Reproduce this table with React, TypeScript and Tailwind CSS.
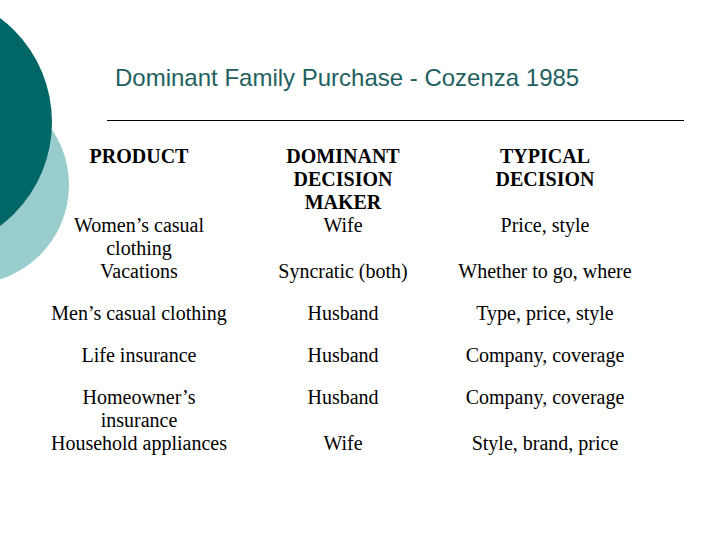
const rows: { cells: string[]; gap: boolean; head?: boolean }[] = [
  { cells: ["PRODUCT", "DOMINANT DECISION MAKER", "TYPICAL DECISION"], gap: false, head: true },
  { cells: ["Women’s casual clothing", "Wife", "Price, style"], gap: false },
  { cells: ["Vacations", "Syncratic (both)", "Whether to go, where"], gap: true },
  { cells: ["Men’s casual clothing", "Husband", "Type, price, style"], gap: true },
  { cells: ["Life insurance", "Husband", "Company, coverage"], gap: true },
  { cells: ["Homeowner’s insurance", "Husband", "Company, coverage"], gap: false },
  { cells: ["Household appliances", "Wife", "Style, brand, price"], gap: false },
];

export default function App() {
  return (
    <div className="relative w-[720px] h-[540px] overflow-hidden bg-white">
      {/* decorative circles on the left edge */}
      <div className="absolute left-[-129px] top-[86px] w-[198px] h-[198px] rounded-full bg-[#99cccc]" />
      <div className="absolute left-[-208px] top-[-8px] w-[260px] h-[260px] rounded-full bg-[#006666]" />

      <div className="relative">
        <h1
          className="pl-[115px] pt-[64px] text-[24px] leading-[28px] text-[#1f5f5f]"
          style={{ fontFamily: '"Liberation Sans", Arial, sans-serif' }}
        >
          Dominant Family Purchase - Cozenza 1985
        </h1>
        <div className="ml-[107px] mt-[28px] w-[577px] border-t border-black" />

        <div
          className="mt-[24px] pl-[47px] grid grid-cols-[184px_150px_180px] gap-x-[37px] text-[20px] leading-[23px] text-black"
          style={{ fontFamily: '"Liberation Serif", "Times New Roman", serif' }}
        >
          {rows.map((row, i) =>
            row.cells.map((cell, j) => (
              <div
                key={`${i}-${j}`}
                className={`text-center ${row.head ? "font-bold" : ""} ${row.gap ? "mb-[19px]" : ""}`}
              >
                {cell}
              </div>
            ))
          )}
        </div>
      </div>
    </div>
  );
}
